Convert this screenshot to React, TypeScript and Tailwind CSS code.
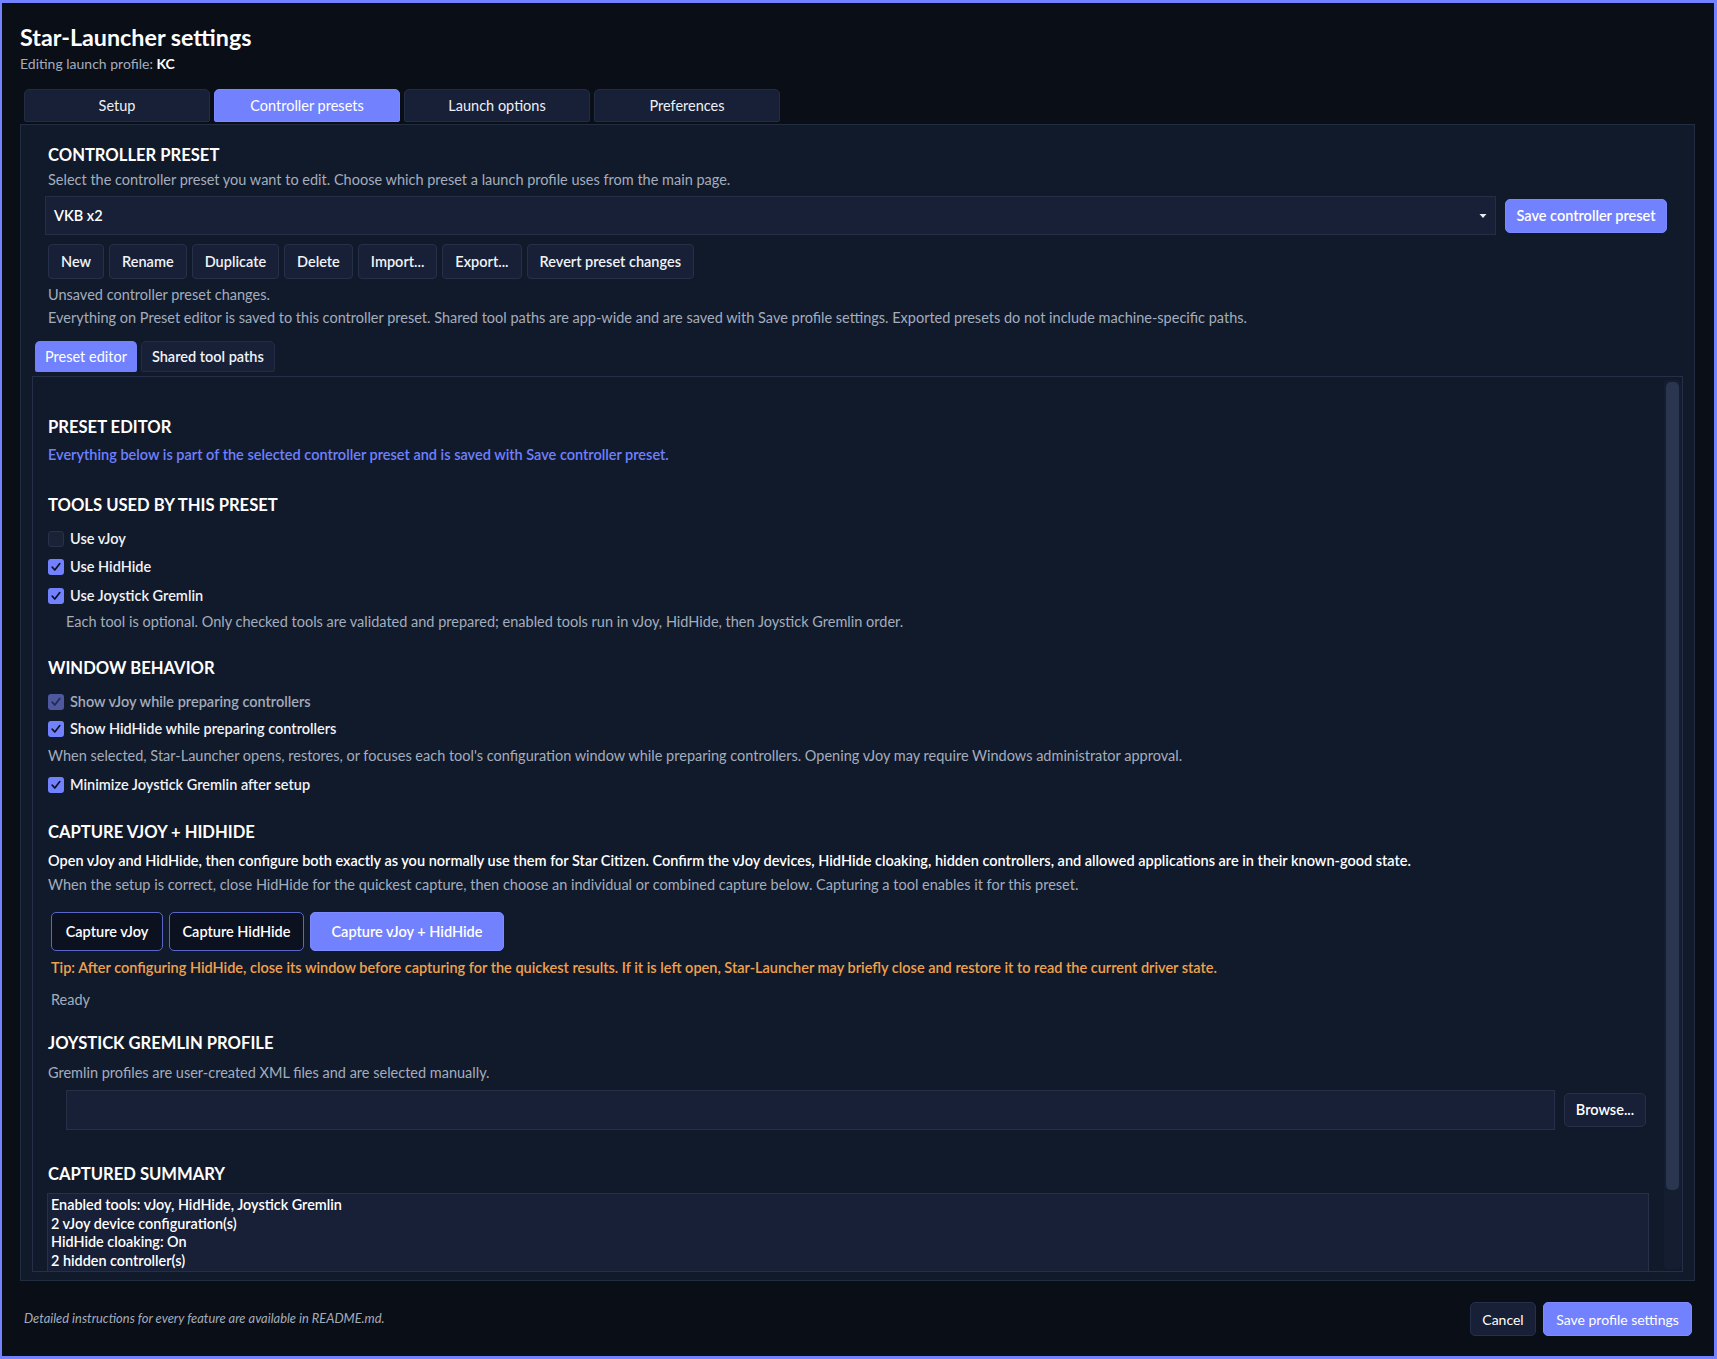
import React from "react";

const FONT = { fontFamily: "'Segoe UI', Lato, 'Noto Sans', sans-serif" };

function Check({ checked, dim }: { checked: boolean; dim?: boolean }) {
  if (!checked) {
    return <span className="inline-block w-[16px] h-[16px] rounded-[3px] bg-[#1a2236] border border-[#273149] shrink-0" />;
  }
  return (
    <span
      className={
        "inline-flex items-center justify-center w-[16px] h-[16px] rounded-[3px] shrink-0 " +
        (dim ? "bg-[#4d589f]" : "bg-[#7282ff]")
      }
    >
      <svg width="12" height="12" viewBox="0 0 12 12" fill="none">
        <path d="M2.2 6.2 L4.8 9 L9.8 2.6" stroke={dim ? "#222a4a" : "#0d1222"} strokeWidth="1.7" strokeLinecap="round" strokeLinejoin="round" />
      </svg>
    </span>
  );
}

function CheckRow({ checked, label, dim }: { checked: boolean; label: string; dim?: boolean }) {
  return (
    <div className="flex items-center gap-[6px] h-[20px]">
      <Check checked={checked} dim={dim} />
      <span className={"text-[14.5px] font-semibold " + (dim ? "text-[#a3abbb]" : "text-[#f1f3f8]")}>{label}</span>
    </div>
  );
}

function Btn({ children }: { children: React.ReactNode }) {
  return (
    <button className="h-[35px] px-[12px] rounded-[4px] bg-[#172036] border border-[#253049] text-[14.5px] font-semibold text-[#f1f3f8]">
      {children}
    </button>
  );
}

function Heading({ children, className = "" }: { children: React.ReactNode; className?: string }) {
  return <div className={"text-[16.6px] leading-[24px] font-bold text-white " + className}>{children}</div>;
}

const P = "text-[14.5px] leading-[20px] text-[#a4adbd]";

export default function App() {
  return (
    <div style={FONT} className="w-[1717px] h-[1359px] bg-[#0a0e17] border-x-[3px] border-t-[3px] border-b-[3px] border-l-[2px] border-[#7382ff] flex flex-col overflow-hidden text-[#f1f3f8]">
      {/* Header */}
      <div className="pl-[18px] pt-[19px]">
        <div className="text-[23.3px] leading-[30px] font-bold text-white">Star-Launcher settings</div>
        <div className="mt-[3px] text-[14px] leading-[18px] text-[#a4adbd]">
          Editing launch profile: <span className="font-bold text-white">KC</span>
        </div>
      </div>
      {/* Tabs */}
      <div className="mt-[16px] pl-[22px] flex gap-[4px]">
        {["Setup", "Controller presets", "Launch options", "Preferences"].map((t) => (
          <div
            key={t}
            className={
              "w-[186px] h-[33px] rounded-t-[5px] rounded-b-[2px] flex items-center justify-center text-[14.5px] border " +
              (t === "Controller presets"
                ? "bg-[#7282ff] border-[#7a89ff] text-white"
                : "bg-[#172036] border-[#222c42] text-[#eef0f6]")
            }
          >
            {t}
          </div>
        ))}
      </div>
      {/* Main panel */}
      <div className="mt-[2px] ml-[18px] mr-[19px] h-[1157px] bg-[#111a2b] border border-[#222d42] px-[11px] flex flex-col">
        <div className="pl-[16px] pt-[18px]">
          <Heading>CONTROLLER PRESET</Heading>
          <div className={"mt-[3px] " + P}>
            Select the controller preset you want to edit. Choose which preset a launch profile uses from the main page.
          </div>
        </div>
        <div className="mt-[6px] ml-[13px] flex items-center gap-[9px]">
          <div className="h-[39px] flex-1 bg-[#172037] border border-[#242f47] flex items-center pl-[8px] pr-[8px]">
            <span className="text-[14.5px] font-semibold text-white flex-1">VKB x2</span>
            <svg width="8" height="6" viewBox="0 0 8 6"><path d="M0.5 1 L7.5 1 L4 5 Z" fill="#e8ebf3" /></svg>
          </div>
          <button className="h-[34px] w-[162px] rounded-[5px] bg-[#7282ff] border border-[#7a89ff] text-[14.5px] font-semibold text-white mr-[16px]">
            Save controller preset
          </button>
        </div>
        <div className="mt-[9px] ml-[16px] flex gap-[5px]">
          {["New", "Rename", "Duplicate", "Delete", "Import...", "Export...", "Revert preset changes"].map((b) => (
            <Btn key={b}>{b}</Btn>
          ))}
        </div>
        <div className={"ml-[16px] mt-[6px] " + P}>Unsaved controller preset changes.</div>
        <div className={"ml-[16px] mt-[3px] " + P}>
          Everything on Preset editor is saved to this controller preset. Shared tool paths are app-wide and are saved with Save profile settings. Exported presets do not include machine-specific paths.
        </div>
        <div className="mt-[13px] ml-[3px] flex gap-[4px]">
          <div className="h-[31px] px-[10px] rounded-t-[5px] rounded-b-[2px] bg-[#7282ff] flex items-center text-[14.5px] text-white">Preset editor</div>
          <div className="h-[31px] px-[10px] rounded-t-[5px] rounded-b-[2px] bg-[#172036] border border-[#222c42] flex items-center text-[14.5px] font-semibold text-[#f1f3f8]">Shared tool paths</div>
        </div>
        {/* Inner scroll panel */}
        <div className="mt-[4px] mb-[8px] flex-1 min-h-0 border border-[#253048] bg-[#111a2b] flex overflow-hidden">
          <div className="flex-1 min-w-0 pl-[15px] pr-[14px] overflow-hidden">
            <Heading className="mt-[38px]">PRESET EDITOR</Heading>
            <div className="mt-[6px] text-[14.5px] leading-[20px] text-[#6f80ff] font-semibold">
              Everything below is part of the selected controller preset and is saved with Save controller preset.
            </div>
            <Heading className="mt-[28px]">TOOLS USED BY THIS PRESET</Heading>
            <div className="mt-[12px]"><CheckRow checked={false} label="Use vJoy" /></div>
            <div className="mt-[8px]"><CheckRow checked label="Use HidHide" /></div>
            <div className="mt-[9px]"><CheckRow checked label="Use Joystick Gremlin" /></div>
            <div className={"mt-[6px] ml-[18px] " + P}>
              Each tool is optional. Only checked tools are validated and prepared; enabled tools run in vJoy, HidHide, then Joystick Gremlin order.
            </div>
            <Heading className="mt-[24px]">WINDOW BEHAVIOR</Heading>
            <div className="mt-[12px]"><CheckRow checked dim label="Show vJoy while preparing controllers" /></div>
            <div className="mt-[7px]"><CheckRow checked label="Show HidHide while preparing controllers" /></div>
            <div className={"mt-[7px] " + P}>
              When selected, Star-Launcher opens, restores, or focuses each tool's configuration window while preparing controllers. Opening vJoy may require Windows administrator approval.
            </div>
            <div className="mt-[9px]"><CheckRow checked label="Minimize Joystick Gremlin after setup" /></div>
            <Heading className="mt-[25px]">CAPTURE VJOY + HIDHIDE</Heading>
            <div className="mt-[7px] text-[14.5px] leading-[20px] font-semibold text-white">
              Open vJoy and HidHide, then configure both exactly as you normally use them for Star Citizen. Confirm the vJoy devices, HidHide cloaking, hidden controllers, and allowed applications are in their known-good state.
            </div>
            <div className={"mt-[4px] " + P}>
              When the setup is correct, close HidHide for the quickest capture, then choose an individual or combined capture below. Capturing a tool enables it for this preset.
            </div>
            <div className="mt-[17px] ml-[3px] flex gap-[6px]">
              <button className="h-[39px] w-[112px] rounded-[5px] bg-[#0c1120] border border-[#5a66c8] text-[14.5px] font-semibold text-white">Capture vJoy</button>
              <button className="h-[39px] w-[135px] rounded-[5px] bg-[#0c1120] border border-[#5a66c8] text-[14.5px] font-semibold text-white">Capture HidHide</button>
              <button className="h-[39px] w-[194px] rounded-[5px] bg-[#7282ff] border border-[#7d8bff] text-[14.5px] font-semibold text-white">Capture vJoy + HidHide</button>
            </div>
            <div className="mt-[7px] ml-[3px] text-[14.5px] leading-[20px] font-semibold text-[#f0a24a]">
              Tip: After configuring HidHide, close its window before capturing for the quickest results. If it is left open, Star-Launcher may briefly close and restore it to read the current driver state.
            </div>
            <div className={"mt-[12px] ml-[3px] " + P}>Ready</div>
            <Heading className="mt-[21px]">JOYSTICK GREMLIN PROFILE</Heading>
            <div className={"mt-[8px] " + P}>
              Gremlin profiles are user-created XML files and are selected manually.
            </div>
            <div className="mt-[7px] ml-[18px] mr-[3px] flex items-center gap-[9px]">
              <div className="flex-1 h-[40px] bg-[#172037] border border-[#263149]" />
              <button className="h-[34px] w-[82px] rounded-[5px] bg-[#172036] border border-[#253049] text-[14.5px] font-semibold text-white">Browse...</button>
            </div>
            <Heading className="mt-[32px]">CAPTURED SUMMARY</Heading>
            <div className="mt-[7px] -ml-px h-[120px] bg-[#172037] border border-[#263149] pl-[3px] pt-[2px] text-[14.4px] leading-[18.7px] font-semibold text-white">
              <div>Enabled tools: vJoy, HidHide, Joystick Gremlin</div>
              <div>2 vJoy device configuration(s)</div>
              <div>HidHide cloaking: On</div>
              <div>2 hidden controller(s)</div>
            </div>
          </div>
          <div className="w-[19px] shrink-0 pt-[3px] pl-[1px]">
            <div className="w-[17px] h-[889px] bg-[#151e31] rounded-[4px] p-[2px]">
              <div className="w-[13px] h-[808px] rounded-[5px] bg-[#2a3550]" />
            </div>
          </div>
        </div>
      </div>
      {/* Footer */}
      <div className="mt-[21px] pl-[22px] pr-[22px] flex items-center">
        <div className="flex-1 text-[12.9px] italic text-[#a4adbd]">Detailed instructions for every feature are available in README.md.</div>
        <div className="flex gap-[7px]">
          <button className="h-[34px] w-[66px] rounded-[5px] bg-[#172036] border border-[#253049] text-[14px] text-white">Cancel</button>
          <button className="h-[34px] w-[149px] rounded-[5px] bg-[#7282ff] border border-[#7d8bff] text-[14px] text-white">Save profile settings</button>
        </div>
      </div>
    </div>
  );
}
